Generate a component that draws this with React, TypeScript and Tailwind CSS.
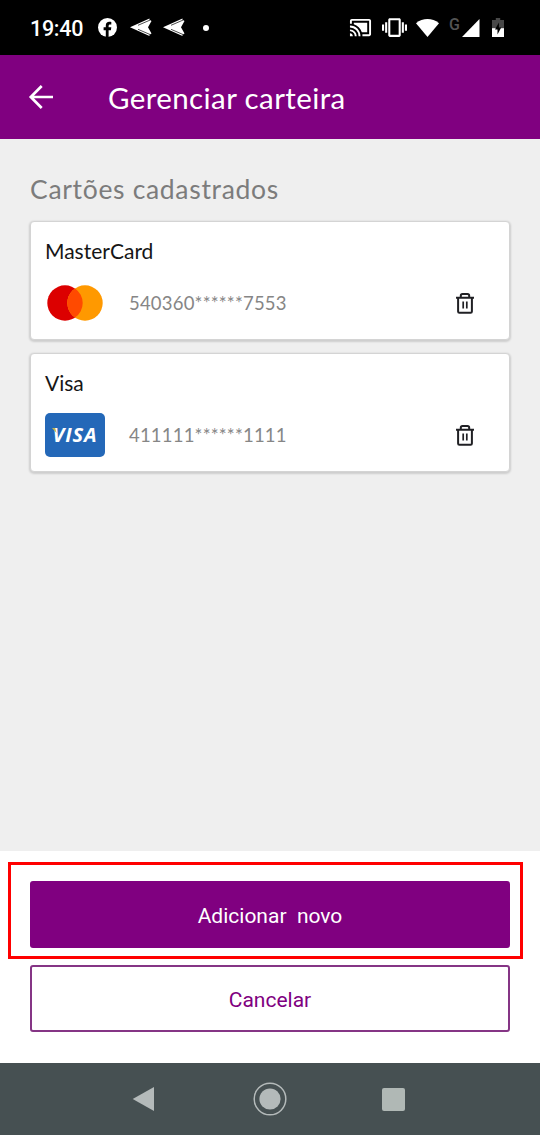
import { MdCastConnected, MdVibration } from "react-icons/md";

interface SavedCard {
  brand: "MasterCard" | "Visa";
  number: string;
}

const CARDS: SavedCard[] = [
  { brand: "MasterCard", number: "540360******7553" },
  { brand: "Visa", number: "411111******1111" },
];

function FacebookIcon() {
  return (
    <svg width="19" height="19" viewBox="0 0 19 19" className="ml-[15px] shrink-0">
      <circle cx="9.5" cy="9.5" r="9.5" fill="#fff" />
      <path
        d="M7.8 19v-6.8H5.6V9.3h2.2V7.5c0-2.5 1.4-3.7 3.5-3.7.9 0 1.7.1 2 .2v2.4h-1.2c-1.1 0-1.5.6-1.5 1.5v1.4h2.7l-.4 2.9h-2.3V19Z"
        fill="#000"
      />
    </svg>
  );
}

function ArrowheadIcon() {
  return (
    <svg width="22" height="19" viewBox="0 0 22 19" className="shrink-0">
      <path d="M0 9.3 19.5.5v1.2L21.5 3 18 9.3l3.5 6.3-2 1.2v1.2Z" fill="#fff" />
      <path d="m8 7.3 12-5.2M8 11.3l12 5.2" stroke="#000" strokeWidth=".7" />
    </svg>
  );
}

function StatusBar() {
  return (
    <header className="flex h-[55px] shrink-0 items-center bg-black pl-[30px] font-[Roboto] text-white">
      <span className="mt-px w-[53px] whitespace-nowrap text-[21.5px] leading-[55px] font-medium tracking-[-0.3px]">
        19:40
      </span>
      <FacebookIcon />
      <div className="ml-[13px] flex gap-[11px]">
        <ArrowheadIcon />
        <ArrowheadIcon />
      </div>
      <span className="ml-[18px] size-1.5 rounded-full bg-white" />
      <div className="ml-auto flex h-6 items-center">
        <MdCastConnected size={23} />
        <MdVibration size={25} className="ml-[10px]" />
        <svg width="23" height="18" viewBox="0 0 23 18" className="ml-[9px]">
          <path d="M0 4.2C6.8-1.3 16.2-1.3 23 4.2L11.5 18Z" fill="#fff" />
        </svg>
        <span className="ml-[10px] -mt-[5px] text-[16px] leading-none font-medium text-[#545454]">
          G
        </span>
        <svg width="18" height="18" viewBox="0 0 18 18" className="ml-[2px]">
          <path d="M0 18 17.5 0v18Z" fill="#fff" />
        </svg>
        <svg width="12" height="19" viewBox="0 0 12 19" className="mr-[36px] ml-[12px]">
          <path d="M3.8 0h4.4v2H12v9H0V2h3.8Z" fill="#484848" />
          <path d="M0 10.2h12V19H0Z" fill="#fff" />
          <path d="M6.9 4.5 3 11.5h2.5v5L9.2 9.5H6.9Z" fill="#000" />
        </svg>
      </div>
    </header>
  );
}

function TitleBar() {
  return (
    <div className="flex h-[84px] shrink-0 items-center bg-[#800080] text-white">
      <button type="button" aria-label="Voltar" className="ml-[28px] w-[80px]">
        <svg
          width="26"
          height="26"
          viewBox="0 0 26 26"
          fill="none"
          stroke="currentColor"
          strokeWidth="2.7"
          className="block"
        >
          <path d="M25 13H3M13.7 2 2.8 13l10.9 11" />
        </svg>
      </button>
      <h1 className="mt-[2px] whitespace-nowrap text-[29.5px] leading-9 tracking-[0.4px]">Gerenciar carteira</h1>
    </div>
  );
}

function MasterCardLogo() {
  return (
    <svg width="60" height="44" viewBox="0 0 60 44">
      <circle cx="20" cy="22" r="17.7" fill="#dc0000" />
      <circle cx="40" cy="22" r="17.7" fill="#ff9900" />
      <path d="M30 7.4a17.7 17.7 0 0 1 0 29.2 17.7 17.7 0 0 1 0-29.2Z" fill="#ff4a00" />
    </svg>
  );
}

function VisaLogo() {
  return (
    <div className="relative flex h-11 w-[60px] items-center justify-center rounded-[5px] bg-[#2468b8]">
      <span className="font-['Open_Sans'] text-[20px] leading-none font-bold tracking-[0.9px] text-white italic">
        VISA
      </span>
      <svg width="5" height="6" viewBox="0 0 5 6" className="absolute top-[15px] left-[7px]">
        <path d="M0 0h3.2l1.3 5Z" fill="#c3b54e" />
      </svg>
    </div>
  );
}

function TrashIcon() {
  return (
    <svg
      width="20"
      height="22"
      viewBox="0 0 20 22"
      fill="none"
      stroke="#202024"
      strokeWidth="2"
      strokeLinejoin="round"
    >
      <path d="M1 5.7h18M3.1 5.7v13.7q0 1.3 1.3 1.3h11.2q1.3 0 1.3-1.3V5.7" />
      <path d="M5.8 5.5V3.7Q5.8 2 7.5 2h5Q14.2 2 14.2 3.7v1.8" />
      <path d="M8.2 9.5v7M11.8 9.5v7" strokeWidth="1.7" />
    </svg>
  );
}

function CardRow({ card }: { card: SavedCard }) {
  return (
    <li className="h-[119px] rounded-[4px] border border-[#d4d4d4] bg-white px-[14px] pt-[13px] shadow-[0_1px_2px_1px_rgba(0,0,0,0.14)]">
      <p className="text-[21px] leading-8 text-[#161616]">{card.brand}</p>
      <div className="mt-[14px] flex h-11 items-center">
        {card.brand === "Visa" ? <VisaLogo /> : <MasterCardLogo />}
        <span className="-mt-px ml-6 whitespace-nowrap text-[18.5px] leading-6 tracking-[0.2px] text-[#868686]">
          {card.number}
        </span>
        <button type="button" aria-label="Remover" className="mr-[20px] ml-auto">
          <TrashIcon />
        </button>
      </div>
    </li>
  );
}

function Actions() {
  return (
    <footer className="relative flex h-[212px] shrink-0 flex-col gap-[17px] bg-white px-[30px] pt-[30px] font-[Roboto] text-[21px]">
      <div className="pointer-events-none absolute top-[11px] left-[8px] h-[97px] w-[515px] border-[3px] border-[#ff0000]" />
      <button
        type="button"
        className="h-[67px] shrink-0 rounded-[3px] bg-[#800080] pt-[4px] whitespace-pre text-white"
      >
        Adicionar  novo
      </button>
      <button
        type="button"
        className="h-[67px] shrink-0 rounded-[3px] border-2 border-[#853585] pt-[4px] text-[#800080]"
      >
        Cancelar
      </button>
    </footer>
  );
}

function NavigationBar() {
  return (
    <nav className="flex h-[72px] shrink-0 items-center bg-[#465052]">
      <svg width="22" height="26" viewBox="0 0 22 26" className="ml-[132px]">
        <path d="M.7 13 22 1v24Z" fill="#b4baba" />
      </svg>
      <svg width="34" height="34" viewBox="0 0 34 34" className="ml-[99px]">
        <circle cx="17" cy="17" r="15.8" fill="none" stroke="#b4baba" strokeWidth="1.5" />
        <circle cx="17" cy="17" r="10.6" fill="#b4baba" />
      </svg>
      <span className="ml-[95px] size-[23px] rounded-[2px] bg-[#b0b8b5]" />
    </nav>
  );
}

export default function App() {
  return (
    <div className="flex h-[1135px] w-[540px] flex-col overflow-hidden bg-[#efefef] font-[Lato,sans-serif]">
      <StatusBar />
      <TitleBar />
      <main className="flex-1 px-[30px] pt-[32px]">
        <h2 className="whitespace-nowrap text-[26.5px] leading-9 tracking-[0.68px] text-[#7c7c7c]">Cartões cadastrados</h2>
        <ul className="mt-[14px] flex flex-col gap-[13px]">
          {CARDS.map((card) => (
            <CardRow key={card.number} card={card} />
          ))}
        </ul>
      </main>
      <Actions />
      <NavigationBar />
    </div>
  );
}
